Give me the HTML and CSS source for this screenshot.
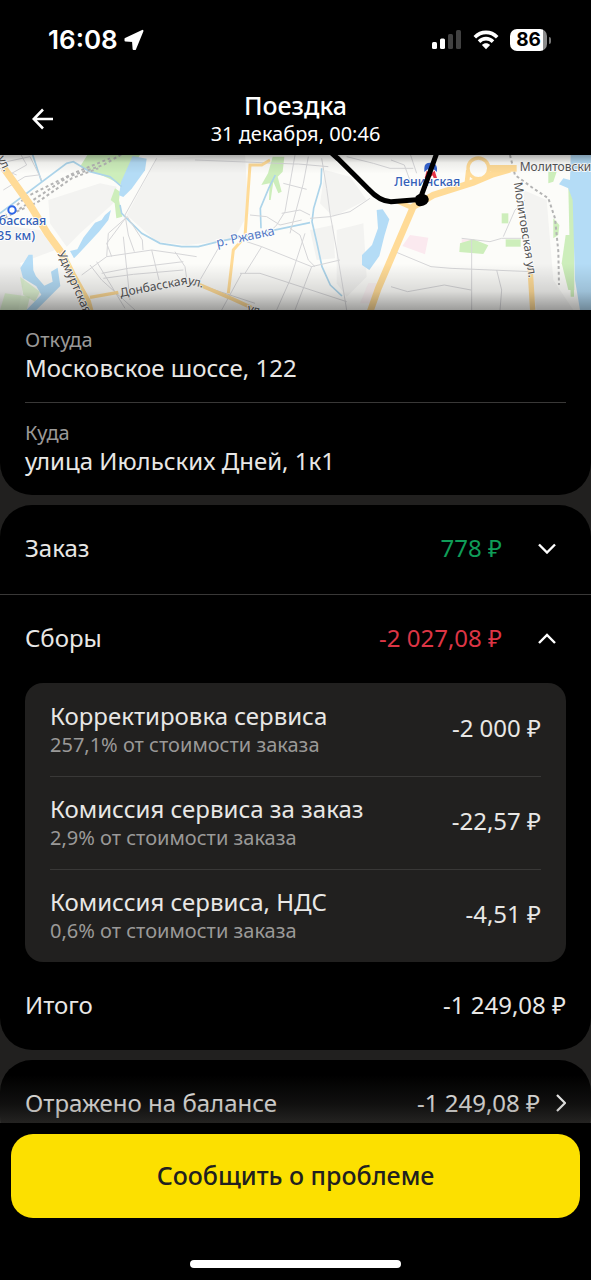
FILE: index.html
```html
<!DOCTYPE html>
<html lang="ru">
<head>
<meta charset="utf-8">
<meta name="viewport" content="width=device-width, initial-scale=1">
<title>Поездка</title>
<link rel="stylesheet" href="styles.css">
</head>
<body>
<div class="app">
  <div class="status">
    <div class="status-time">
      <span>16:08</span>
      <svg width="20" height="22" viewBox="0 0 20 22"><path d="M18.500 1.800 1.500 10V11.500L9 12 9.600 20H11Z" fill="#fff" stroke="#fff" stroke-width="2" stroke-linejoin="round"/></svg>
    </div>
    <div class="status-icons">
      <svg width="30" height="20" viewBox="0 0 30 20"><g fill="#fff"><rect x="0" y="12" width="5" height="7" rx="1.500"/><rect x="8" y="8.500" width="5" height="10.500" rx="1.500"/></g><g fill="#414141"><rect x="16" y="4" width="5" height="15" rx="1.500"/><rect x="24" y="0" width="5" height="19" rx="1.500"/></g></svg>
      <svg width="26" height="20" viewBox="0 0 26 20"><g fill="none" stroke="#fff" stroke-width="3.600"><path d="M1.800 7.200c6.400-6.400 16-6.400 22.400 0"/><path d="M6 11.600c4.100-4 9.900-4 14 0"/></g><path d="M13 19.200 8.900 15c2.300-2.300 5.900-2.300 8.200 0Z" fill="#fff"/></svg>
      <div class="battery"><span class="battery-level">86</span></div>
    </div>
  </div>
  <header class="nav">
    <button class="back" type="button" aria-label="Назад"><svg width="21" height="22" viewBox="0 0 21 22"><path d="M11 1.500 1.700 11 11 20.500M1.700 11H21" fill="none" stroke="#fff" stroke-width="2.600"/></svg></button>
    <div class="nav-text">
      <h1 class="nav-title">Поездка</h1>
      <p class="nav-sub">31 декабря, 00:46</p>
    </div>
  </header>
  <main class="content">
    <svg class="map" viewBox="0 15 1773 465" preserveAspectRatio="xMidYMid slice" role="img" aria-label="Карта">
      <defs>
        <linearGradient id="shade" x1="0" y1="0" x2="0" y2="1"><stop offset="0" stop-color="#000" stop-opacity=".3"/><stop offset=".05" stop-color="#000" stop-opacity=".06"/><stop offset=".12" stop-color="#000" stop-opacity="0"/><stop offset=".7" stop-color="#000" stop-opacity="0"/><stop offset=".88" stop-color="#000" stop-opacity=".13"/><stop offset="1" stop-color="#000" stop-opacity=".38"/></linearGradient>
      </defs>
      <rect y="0" width="1773" height="495" fill="#fcfcf9"/>
      <g fill="#f3f3f1">
        <path d="M470 28 735 10 745 190 700 270 560 285 470 275 380 195Z"/>
        <path d="M145 150 300 100 350 110 340 160 240 250 200 290 150 220Z"/>
        <path d="M0 225 120 240 165 300 60 340 75 380 55 480H0Z"/>
        <path d="M975 60 1050 80 1100 150 1000 200 960 160Z"/>
        <path d="M1010 240 1090 220 1100 380 1040 440 1010 400Z"/>
        <path d="M1570 120 1640 150 1660 390 1720 480 1610 480 1590 360Z"/>
        <path d="M930 240 1000 225 1005 325 950 330Z"/>
      </g>
      <g fill="#fbe9ef"><path d="m1230 255 55 8-10 50-68-25Z"/><path d="M1385 268h27v22h-27Z"/><path d="M1105 400h25v60h-50Z" opacity=".5"/></g>
      <g fill="#cdeebb">
        <path d="M262 15 420 15 385 70 365 105 325 85 290 70 240 50Z"/>
        <path d="m345 115 15 10-3 25 10 50-18 5-5-45-12-10Z"/>
        <path d="m60 380 60 45-15 30-35-20Z" opacity=".6"/><path d="M15 430 90 440 80 480H0Z" opacity=".6"/>
        <path d="m818 20 35 0-5 45-15 15 12 45-10 5-15-35-8 55-5 0 2-50-25 5 20-35Z"/>
        <path d="m1380 280 40-12 45 18-15 26-72-6Z"/><path d="M1505 190h20v30h-20Z"/><path d="m1517 268h45v22h-45Z"/>
        <path d="M1645 65h25l-10 30-15 5Z"/><path d="M1705 110 1712 440H1722V110Z"/><path d="m1660 205 18 20-3 30-15 10Z"/><path d="m1697 255-12 85 20 80h18V255Z"/>
      </g>
      <g fill="#b4dcf6">
        <path d="m398 18 42 8-5 35-40 55-25 25-13-5 6-40Z"/>
        <path d="m333 180-8 30-28 35-60 65-15 15-12-22 22-5 18-35 35-45 20-8 10-15Z"/>
        <path d="m98 314-12 0-25 40 8 30 40 25 15 25-45 46h30l72-72-8-55-20 12 5 30-25 12-25-28-8-18Z"/>
        <path d="m1130 180 18-2 20 30-15 50-15 60-30 42-22-15 0-30 30-30 18-50Z"/>
        <path d="M1712 15H1773V480H1740L1725 390 1718 150 1705 115 1677 103 1690 85 1710 90Z"/>
      </g>
      <g fill="none" stroke="#acd4ea" stroke-width="5">
        <path d="m0 190 200-150 20-5 50 30 60 15 35 30"/><path d="m95 5 18 55 12 35"/>
        <path d="m360 165 5 25 60 60 55 30 65 10H595L655 275 930 218"/>
        <path d="m783 235-2-60 25-60 20-40"/><path d="m965 55-2 45-22 75-5 40 15 65 15 70 25 55 35 33"/>
      </g>
      <g fill="none" stroke="#d6d6d8" stroke-width="3">
        <path d="m20 35 70-15 35 70M0 55l50 20M55 0l25 45-45 25M10 120l65-40 40-5"/>
        <path d="m585 30 300 12 10 0 90 8"/><path d="m470 25-95 170M380 200l-60 80 15 40M320 320l5-70 57-50m0 0 45 70 2 30M375 195l10 60 18 50M245 375l75-55 135-20 70 10 65 10M270 345l35 45 100 90M290 335l85 140M305 370l80-15 165-20M310 385l90-12 150-13M525 305 555 350 560 385M370 260l20 190M455 300l22 90"/>
        <path d="m885 15-30 170-25 40-10 10M925 20l-15 80-40 150M850 100l70 18M845 190l55-10 30 15M750 195l50 5 40 25 65-15"/>
        <path d="m965 25 15 90 10 75 20 110 30 180"/><path d="m930 205 60-5 60-15 60-40M870 235l30 20 25 75 20 20M600 390l55-95M740 275l45 15 150 60 85-20M735 370l50-80M935 350l-50 130M720 370l60 0 260 85M725 370l-60 110M915 250l-45 140-40 90M585 400l180 60"/>
        <path d="m1173 300 120 50 60 5 240 10M1173 410l50 15 110-20 80 15M1173 30l40 15 20 55M1230 10l20 60M1385 265l85 10 35-10h80M1415 270V480M1490 360l15 60-5 60M1510 260l35-80 30-30M1040 20l80 20 50 15 70 0"/>
      </g>
      <g fill="none" stroke-dasharray="9 8" stroke="#b4b4b4" stroke-width="6">
        <path d="m15 205 100-65L205 80 310 45 370 10"/><path d="m50 185 65-30 100-70 80-30M0 210l80-70 70-35L220 70 330 25"/><path d="m1530 15 15 60 55 40 45 30 20 60 10 100 2 100"/>
      </g>
      <g fill="none" stroke="#ffdb97" stroke-width="16">
        <path d="m12 55 75 105 55 90 40 55 35 70 45 80 8 30" stroke-width="22"/>
        <path d="m270 442 85-15" stroke-width="10"/>
        <path d="m810 30-25 15-35 0-15 215-35 40-15 130" stroke-width="9"/>
        <path d="m593 402 105 45 65 30" stroke-width="11"/>
        <path d="m1105 500 30-85 60-140 45-105 60-35 120-38 60-25 50-14" stroke-width="20"/>
        <path d="m1465 55h85" stroke-width="20"/>
        <path d="m1195 155 45 20m160-70 5-45" stroke-width="14"/>
        <circle cx="1435" cy="55" r="31" stroke-width="10" fill="#fcfcf9"/>
        <path d="m1590 350 8 130" stroke-width="16"/>
      </g>
      <circle cx="36" cy="180" r="11" fill="#fff" stroke="#2d65e8" stroke-width="6"/>
      <g class="map-place"><text x="-4" y="226">басская</text><text x="-8" y="271">35 км)</text><text x="1183" y="108">Ленинская</text></g>
      <g class="map-street">
        <text transform="translate(-8 24) rotate(65)">ул.</text>
        <text transform="translate(172 310) rotate(66)">Удмуртская</text>
        <text transform="translate(362 441) rotate(-11)">Донбасская</text>
        <text transform="translate(562 402) rotate(14)">ул.</text>
        <text transform="translate(740 486) rotate(14)">ул.</text>
        <text x="1559" y="64">Молитовский</text>
        <text transform="translate(1541 98) rotate(81)">Молитовская ул.</text>
      </g>
      <text class="map-river" transform="translate(652 291) rotate(-12)">р. Ржавка</text>
      <path d="M1273 66V54q0-16 18-16t20 16v12l-10-8-9 8-9-8Z" fill="#3563cf"/><path d="m1274 84 6-22 12 9 12-9 7 22h-10l-3-8-6 5-6-5-3 8Z" fill="#e53446"/>
      <path d="m990 5 25 22 55 55 35 35q35 38 68 38l95-7M1310 10l-25 70-24 65" fill="none" stroke="#000" stroke-width="15" stroke-linecap="round" stroke-linejoin="round"/>
      <path d="M1250 140q14-12 30 0 10 15-10 24-18 6-21-7Z" stroke="#000" stroke-width="6"/>
      <rect y="15" width="1773" height="465" fill="url(#shade)"/>
    </svg>
    <section class="card card-address">
      <div class="address"><div class="label">Откуда</div><div class="value">Московское шоссе, 122</div></div>
      <div class="address"><div class="label">Куда</div><div class="value">улица Июльских Дней, 1к1</div></div>
    </section>
    <section class="card">
      <button class="row row-line" type="button" aria-expanded="false"><span class="name">Заказ</span><span class="income">778 ₽</span><span class="toggle"><svg width="18" height="12" viewBox="0 0 18 12"><path d="m1 2.500 8 8 8-8" fill="none" stroke="#fff" stroke-width="2.400"/></svg></span></button>
      <button class="row" type="button" aria-expanded="true"><span class="name">Сборы</span><span class="expense">-2 027,08 ₽</span><span class="toggle"><svg width="18" height="12" viewBox="0 0 18 12"><path d="m1 11 8-8 8 8" fill="none" stroke="#fff" stroke-width="2.400"/></svg></span></button>
      <div class="fees">
        <div class="fee"><div class="fee-text"><div class="value">Корректировка сервиса</div><div class="label">257,1% от стоимости заказа</div></div><span class="fee-amount">-2 000 ₽</span></div>
        <div class="fee"><div class="fee-text"><div class="value">Комиссия сервиса за заказ</div><div class="label">2,9% от стоимости заказа</div></div><span class="fee-amount">-22,57 ₽</span></div>
        <div class="fee"><div class="fee-text"><div class="value">Комиссия сервиса, НДС</div><div class="label">0,6% от стоимости заказа</div></div><span class="fee-amount">-4,51 ₽</span></div>
      </div>
      <div class="row"><span class="name">Итого</span><span>-1 249,08 ₽</span></div>
    </section>
    <section class="card card-balance">
      <button class="row" type="button"><span class="name">Отражено на балансе</span><span>-1 249,08 ₽</span><svg class="next" width="10" height="18" viewBox="0 0 10 18"><path d="m1 1 8 8-8 8" fill="none" stroke="#fff" stroke-width="2.200"/></svg></button>
    </section>
    <div class="fade"></div>
  </main>
  <footer class="footer">
    <button class="report" type="button">Сообщить о проблеме</button>
    <div class="home"></div>
  </footer>
</div>
</body>
</html>
```
FILE: styles.css
```css
* { box-sizing: border-box; }
body {
  margin: 0;
  background: #000;
  color: #e8e7e5;
  font: 24px/32px "Noto Sans", "Open Sans", sans-serif;
}
button { font: inherit; color: inherit; background: none; border: 0; margin: 0; padding: 0; cursor: pointer; }
svg { display: block; flex: none; }
.app { display: flex; flex-direction: column; height: 100vh; }

.status {
  display: flex;
  flex: none;
  justify-content: space-between;
  align-items: center;
  height: 80px;
  padding: 0 40px 0 48px;
  color: #fff;
  font-family: Inter, sans-serif;
  font-weight: 600;
}
.status-time { display: flex; align-items: center; gap: 6px; font-size: 26px; }
.status-icons { display: flex; align-items: center; gap: 11px; }
.battery { position: relative; padding-right: 4px; }
.battery::after {
  content: "";
  position: absolute;
  right: 0;
  top: 8px;
  width: 2px;
  height: 7px;
  border-radius: 0 2px 2px 0;
  background: #777;
}
.battery-level {
  display: block;
  width: 37px;
  border-radius: 7px;
  background: linear-gradient(to right, #fff 88%, #8b8b8b 88%);
  color: #000;
  font-size: 19px;
  font-weight: 700;
  line-height: 22px;
  text-align: center;
}

.nav { display: grid; grid-template-columns: 60px 1fr 60px; align-items: center; flex: none; height: 75px; padding-top: 2px; }
.back { display: flex; justify-content: flex-end; align-items: center; width: 53px; height: 60px; }
.nav-text { text-align: center; color: #fff; }
.nav-title { margin: 0; font-size: 25px; font-weight: 500; line-height: 30px; }
.nav-sub { margin: 0; font-size: 20px; line-height: 28px; }

.content { position: relative; flex: 1; min-height: 0; overflow: hidden; background: #21201f; }
.map { width: 100%; height: 155px; }
.map text { font-family: "Noto Sans", sans-serif; stroke: #fff; stroke-width: 5px; paint-order: stroke; }
.map-place { fill: #3461b8; font-size: 37px; font-weight: 500; }
.map-street { fill: #555; font-size: 36px; }
.map .map-river { fill: #5479c4; font-size: 38px; }

.card { margin-bottom: 10px; border-radius: 32px; background: #000; }
.card-address { border-radius: 0 0 32px 32px; padding: 0 25px; }
.card-balance { margin-bottom: 0; }
.address { padding: 17px 0 19px; }
.address + .address, .fee + .fee { border-top: 1px solid #393837; }
.label { color: #9a9998; font-size: 20px; line-height: 26px; }
.value { line-height: 30px; }
.row { display: flex; align-items: center; width: 100%; height: 88px; padding: 0 25px 3px; text-align: left; }
.row-line { height: 90px; border-bottom: 1px solid #393837; }
.name { flex: 1; }
.income { color: #0f9d58; }
.expense { color: #dc3545; }
.toggle { display: flex; justify-content: center; width: 38px; margin-left: 26px; }
.next { margin-left: 16px; }
.fees { margin: 0 25px; padding: 0 25px; border-radius: 18px; background: #21201f; }
.fee { display: flex; align-items: center; min-height: 93px; padding: 17px 0; }
.fee-text { flex: 1; }
.fee-amount { padding-bottom: 4px; }
.fee .label { line-height: 28px; }

.fade {
  position: absolute;
  inset: auto 0 0;
  height: 48px;
  background: linear-gradient(to bottom, rgba(80, 78, 75, 0), rgba(80, 78, 75, .2) 60%, rgba(80, 78, 75, .45));
  pointer-events: none;
}
.footer { flex: none; padding: 11px 11px 12px; }
.report {
  display: block;
  width: 100%;
  height: 84px;
  padding-bottom: 2px;
  border-radius: 22px;
  background: #fce000;
  color: #21201f;
  font-size: 25px;
  font-weight: 500;
}
.home { width: 37%; height: 8px; margin: 42px auto 0; border-radius: 4px; background: #fff; }
```
